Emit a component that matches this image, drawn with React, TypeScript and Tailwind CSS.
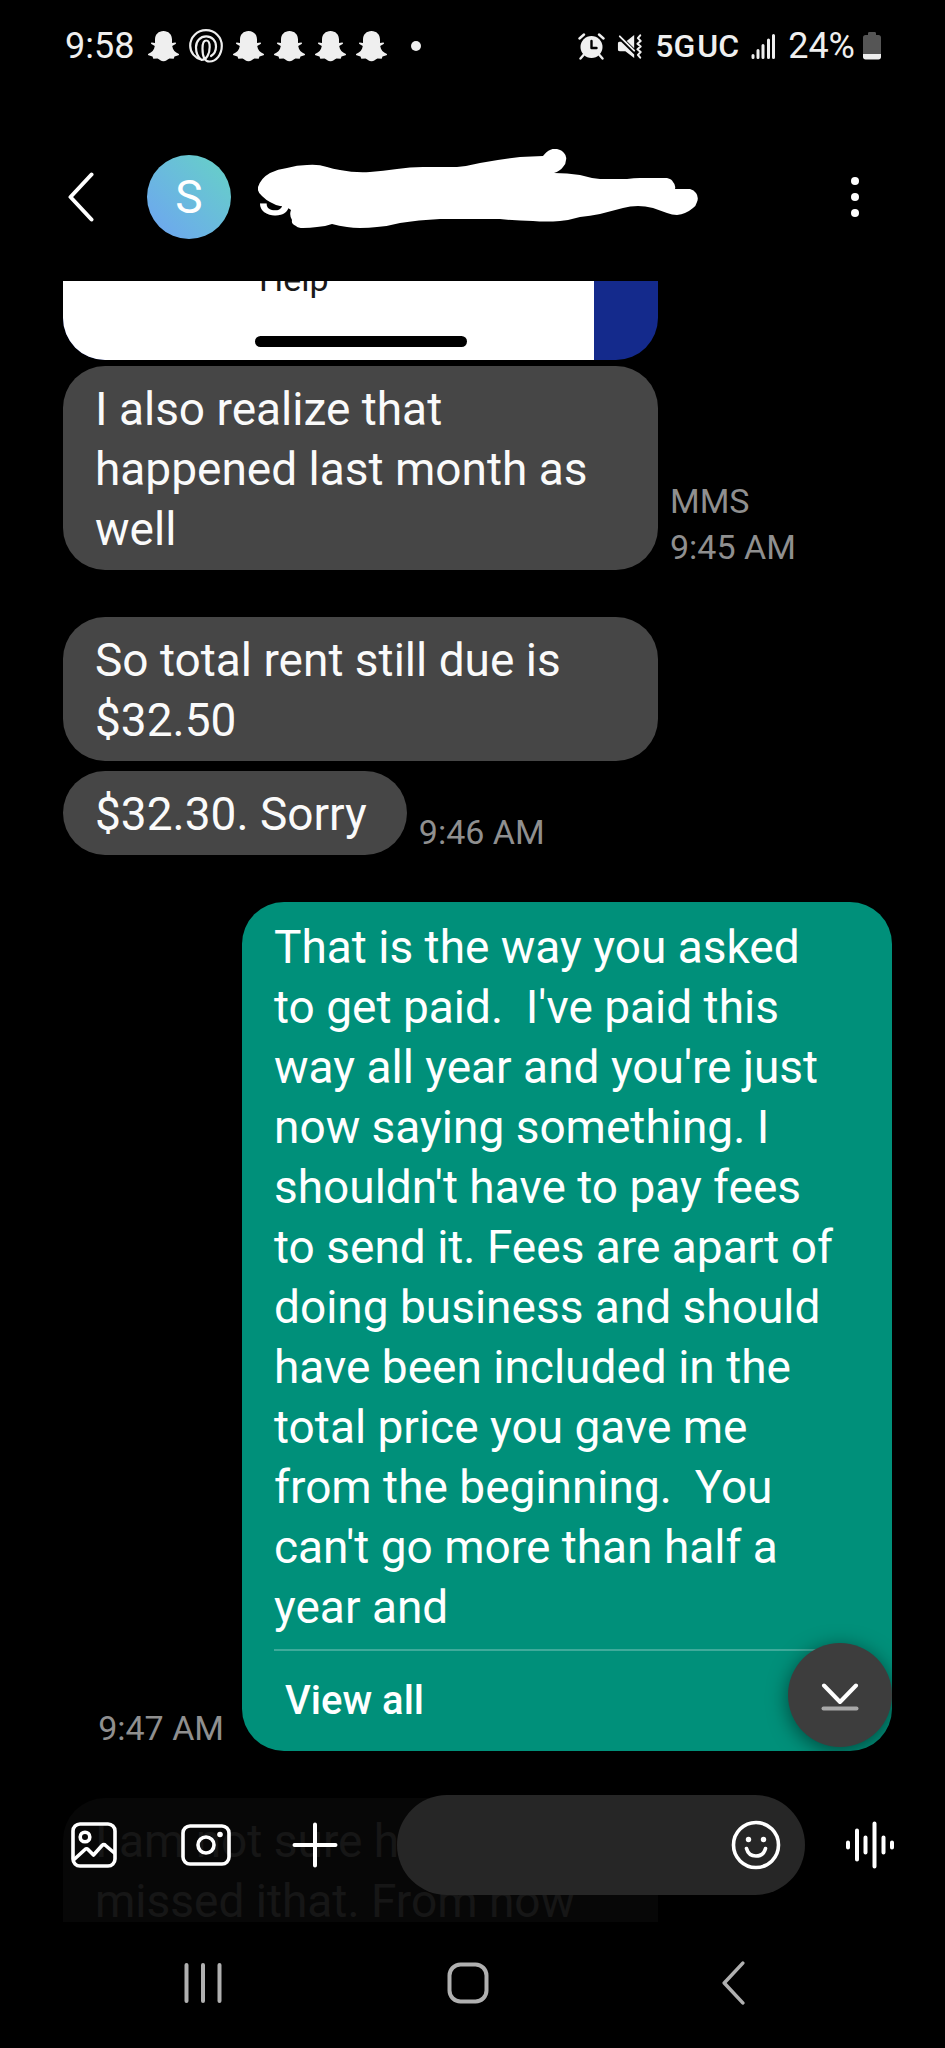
// App.tsx
import { useState } from "react";
import type { ReactNode } from "react";

const LONG_REPLY =
  "That is the way you asked to get paid.  I've paid this way all year and you're just now saying something. I shouldn't have to pay fees to send it. Fees are apart of doing business and should have been included in the total price you gave me from the beginning.  You can't go more than half a year and";

/* ---------- icons ---------- */

function Ghost() {
  return (
    <svg width="31" height="31" viewBox="0 0 31 31" fill="currentColor">
      <path d="M15.5 0c5 0 8.5 3.5 8.5 8.5V12l3.2-.6c1 0 1.2 1 .4 1.5L24.2 15c.6 4 3 6.5 6.3 7.8.7.4.7 1 0 1.4l-4 1.4-.8 2.2-4.2-.3c-2 .8-3.5 2.8-6 2.8s-4-2-6-2.8l-4.2.3-.8-2.2-4-1.4c-.7-.4-.7-1 0-1.4C3.8 21.5 6.2 19 6.8 15l-3.4-2.1c-.8-.5-.6-1.5.4-1.5L7 12V8.5C7 3.5 10.5 0 15.5 0z" />
    </svg>
  );
}

function Spiral() {
  return (
    <svg
      width="34"
      height="34"
      viewBox="0 0 34 34"
      fill="none"
      stroke="currentColor"
      strokeWidth="2.2"
      strokeLinecap="round"
      strokeLinejoin="round"
    >
      <path d="M12.5 30.8C5.800 29 1.200 23.500 1.200 16.800 1.200 8 8.200 1.200 17 1.200S32.800 8 32.800 16.800c0 8.500-5.300 15.700-12.300 15.700-4.500 0-7-4.500-7-13 0-5 1.300-8 3.700-8 2.500 0 3.500 3 3.500 6.500 0 6.500-3 12.800-8.200 12.800M12.500 30.800C9 28.500 7 23.500 7 18.300 7 12 11.300 7.400 17.200 7.400c5.800 0 9.800 4.300 9.800 10 0 4-1.800 7.600-5 9.600" />
    </svg>
  );
}

function Alarm() {
  return (
    <svg width="27" height="27" viewBox="0 0 27 27" fill="none">
      <circle cx="13.5" cy="14" r="11" fill="currentColor" />
      <path
        d="M1.5 5.5 6 1.500M25.500 5.500 21 1.500M5.500 22 2.500 25.500M21.500 22l3 3.500"
        stroke="currentColor"
        strokeWidth="2.4"
        strokeLinecap="round"
      />
      <path
        d="M13.500 8v7h5"
        stroke="#000"
        strokeWidth="2.4"
        strokeLinecap="round"
        strokeLinejoin="round"
      />
    </svg>
  );
}

function MutedVibrate() {
  return (
    <svg width="26" height="27" viewBox="0 0 28 27" fill="none">
      <path
        d="M2.500 8.500h2L18.500 22v4L9 18.500H3c-1.500 0-2-.5-2-2v-6c0-1 .5-2 1.500-2zM18.500 1v14.500L10.500 7.500z"
        fill="currentColor"
      />
      <path
        d="M3 2.500 18.500 18"
        stroke="currentColor"
        strokeWidth="2"
        strokeLinecap="round"
      />
      <path
        d="M25 1.500l-2.500 3 3 3-3.500 3 3.500 3-3.500 3 3.500 3-3 3 2.500 3"
        stroke="currentColor"
        strokeWidth="2.2"
        strokeLinecap="round"
        strokeLinejoin="round"
      />
    </svg>
  );
}

function Signal() {
  return (
    <svg
      width="25"
      height="27"
      viewBox="0 0 25 27"
      stroke="currentColor"
      strokeWidth="3"
      strokeLinecap="round"
    >
      <path d="M2 22.500V24.500M7 17.500v7M12 12.500v12M17.500 7v17.500M22.500 2.500v22" />
    </svg>
  );
}

function Battery() {
  return (
    <svg width="18" height="28" viewBox="0 0 18 28">
      <path
        d="M5 1.500C5 .5 5.500 0 6.500 0h5c1 0 1.500.5 1.500 1.500V3h2.500C17 3 18 4 18 5.500V22H0V5.500C0 4 1 3 2.500 3H5z"
        fill="#555"
      />
      <path d="M0 22h18v3c0 1.500-1 2.500-2.500 2.500h-13C1 27.500 0 26.500 0 25z" fill="#efefef" />
    </svg>
  );
}

// marker stroke drawn over the contact name
function Scribble() {
  return (
    <svg width="440" height="80" viewBox="0 0 440 80" fill="#fff">
      <path d="M0 38Q3 29 12 24Q20 20 29 19Q39 16 49 16Q60 15 69 18Q75 20 82 21Q97 24 112 23Q125 22 139 20Q152 18 165 18H199Q210 17 222 14Q242 10 262 8L285 7Q289 2 292 1Q296 -1 299 0Q304 1 306 4Q309 7 308 11Q308 15 305 18Q302 22 296 24Q309 24 322 26Q332 29 342 30H369Q376 29 382 29H409Q414 30 415 33Q418 36 417 40H432Q436 41 438 44Q441 48 439 53Q438 57 435 59Q428 65 419 66Q414 66 409 64L395 59Q387 57 380 57Q372 57 365 59L342 65Q332 67 322 68Q312 71 302 72Q288 73 275 72Q258 72 242 70H182Q160 71 142 74Q131 77 119 78Q111 79 102 79Q95 79 89 78Q81 77 74 75Q66 78 59 78Q52 79 45 79Q40 79 38 77Q33 75 34 71Q31 66 33 61Q28 57 22 57Q17 56 12 53Q8 51 4 47Q-1 43 0 38Z" />
    </svg>
  );
}

function ChevronLeft({ size }: { size: number }) {
  return (
    <svg
      width={size / 2}
      height={size}
      viewBox="0 0 26 52"
      fill="none"
      stroke="currentColor"
      strokeWidth="4"
      strokeLinecap="round"
      strokeLinejoin="round"
    >
      <path d="M23.500 3.500 2.500 26l21 22.500" />
    </svg>
  );
}

function GalleryIcon() {
  return (
    <svg
      width="46"
      height="46"
      viewBox="0 0 46 46"
      fill="none"
      stroke="currentColor"
      strokeWidth="3.6"
      strokeLinejoin="round"
    >
      <rect x="2" y="2" width="42" height="42" rx="7" />
      <circle cx="14" cy="15" r="4.800" />
      <path d="M2.500 38 14 27.500c1-1 2.200-1 3 0l5.500 5.500 8.500-9.500c1.200-1.200 2.500-1.200 3.600 0L44 31.500" />
    </svg>
  );
}

function CameraIcon() {
  return (
    <svg width="50" height="42" viewBox="0 0 50 42" fill="none">
      <rect
        x="2"
        y="2"
        width="46"
        height="38"
        rx="7"
        stroke="currentColor"
        strokeWidth="3.600"
      />
      <circle cx="25" cy="21" r="8" stroke="currentColor" strokeWidth="3.600" />
      <circle cx="39" cy="10.500" r="2.800" fill="currentColor" />
    </svg>
  );
}

function PlusIcon() {
  return (
    <svg
      width="46"
      height="46"
      viewBox="0 0 46 46"
      stroke="currentColor"
      strokeWidth="4"
      strokeLinecap="round"
    >
      <path d="M23 2.500v41M2.500 23h41" />
    </svg>
  );
}

function SmileyIcon() {
  return (
    <svg width="50" height="50" viewBox="0 0 50 50" fill="none">
      <circle cx="25" cy="25" r="22.500" stroke="currentColor" strokeWidth="3.600" />
      <circle cx="17.500" cy="19.500" r="2.700" fill="currentColor" />
      <circle cx="32.500" cy="19.500" r="2.700" fill="currentColor" />
      <path
        d="M15.500 28.500c1.500 5.500 5.500 7.500 9.500 7.500s8-2 9.500-7.500"
        stroke="currentColor"
        strokeWidth="3.600"
        strokeLinecap="round"
      />
    </svg>
  );
}

function VoiceIcon() {
  return (
    <svg
      width="50"
      height="48"
      viewBox="0 0 50 48"
      stroke="currentColor"
      strokeWidth="4"
      strokeLinecap="round"
    >
      <path d="M3 21.500v5M12 9.500v29M20.500 16.500v15M29.500 2.500v43M38.500 16.500v15M47 21.500v5" />
    </svg>
  );
}

/* ---------- messages ---------- */

function Received({
  children,
  stamp,
}: {
  children: ReactNode;
  stamp?: string[];
}) {
  return (
    <div className="flex items-end gap-3">
      <p className="max-w-[595px] rounded-[42px] bg-[#464646] pt-[13px] pr-10 pb-[11px] pl-8 text-[#fafafa]">
        {children}
      </p>
      {stamp && (
        <div className="shrink-0 text-[34px] leading-[46px] text-[#8f8f8f]">
          {stamp.map((s) => (
            <div key={s}>{s}</div>
          ))}
        </div>
      )}
    </div>
  );
}

export default function App() {
  const [draft, setDraft] = useState("");

  return (
    <div className="flex h-screen flex-col overflow-hidden bg-black font-[Roboto,sans-serif] text-[46px] leading-[60px] text-white">
      {/* Status bar */}
      <div className="flex h-[92px] shrink-0 items-center justify-between pr-16 pl-[65px] text-[36px] leading-10 text-[#efefef]">
        <div className="flex items-center">
          <span className="mr-3.5">9:58</span>
          <div className="flex items-center gap-2.5">
            <Ghost />
            <Spiral />
            <Ghost />
            <Ghost />
            <Ghost />
            <Ghost />
          </div>
          <span className="ml-6 h-2.5 w-2.5 rounded-full bg-[#efefef]" />
        </div>
        <div className="flex items-center gap-3">
          <Alarm />
          <MutedVibrate />
          <span className="flex gap-0.5 text-[32px] font-medium">
            <span>5G</span>
            <span>UC</span>
          </span>
          <Signal />
          <span className="flex items-center gap-2">
            24%
            <Battery />
          </span>
        </div>
      </div>

      {/* Conversation header */}
      <header className="flex h-[189px] shrink-0 items-center pt-[21px] pr-[72px] pl-[68px]">
        <button type="button" aria-label="Back" className="mr-[53px]">
          <ChevronLeft size={52} />
        </button>
        <div className="flex h-[84px] w-[84px] items-center justify-center rounded-full bg-linear-to-tr from-[#6ea2f2] to-[#66d2c4]">
          S
        </div>
        <div className="relative ml-[27px] flex-1">
          <h1 className="text-[54px] font-medium">S</h1>
          <div className="absolute -top-[18px] left-0">
            <Scribble />
          </div>
        </div>
        <button
          type="button"
          aria-label="More options"
          className="flex w-9 flex-col items-center gap-2"
        >
          <span className="h-2 w-2 rounded-full bg-white" />
          <span className="h-2 w-2 rounded-full bg-white" />
          <span className="h-2 w-2 rounded-full bg-white" />
        </button>
      </header>

      {/* Messages */}
      <main className="relative min-h-0 flex-1 overflow-hidden">
        <div className="flex flex-col pr-[53px] pl-[63px]">
          {/* Picture attachment, scrolled most of the way out */}
          <div className="mb-1.5 flex h-[79px] w-[595px] overflow-hidden rounded-b-[42px] bg-[#142a8c]">
            <div className="flex w-[531px] flex-col items-start justify-end bg-white pb-[13px] pl-48 text-[34px] leading-[46px] text-[#1a1a1a]">
              <span className="mb-[34px] shrink-0 px-1">Help</span>
              <span className="h-[11px] w-[212px] shrink-0 rounded-full bg-black" />
            </div>
          </div>

          <Received stamp={["MMS", "9:45 AM"]}>
            I also realize that happened last month as well
          </Received>

          <div className="mt-[47px] flex flex-col gap-2.5">
            <Received>So total rent still due is $32.50</Received>
            <Received stamp={["9:46 AM"]}>$32.30. Sorry</Received>
          </div>

          <div className="mt-[47px] flex items-end justify-end gap-[18px]">
            <span className="text-[34px] leading-[46px] text-[#8f8f8f]">
              9:47 AM
            </span>
            <div className="relative w-[650px] rounded-[42px] bg-[#00907a] px-8 pt-[15px]">
              <p className="pr-3 whitespace-pre-wrap">{LONG_REPLY}</p>
              <button
                type="button"
                className="mt-3 block h-[102px] w-full border-t-2 border-[#3fab9b] px-[11px] text-left text-[40px] font-medium"
              >
                View all
              </button>
              <button
                type="button"
                aria-label="Jump to latest"
                className="absolute right-0 bottom-1 flex h-[104px] w-[104px] items-center justify-center rounded-full bg-[#3d3d3d] pt-1 shadow-[0_4px_20px_rgba(0,0,0,0.5)]"
              >
                <svg
                  width="38"
                  height="28"
                  viewBox="0 0 38 28"
                  fill="none"
                  strokeWidth="4"
                  strokeLinecap="round"
                  strokeLinejoin="round"
                >
                  <path d="M3 2.500 19 19 35 2.500" stroke="#fff" />
                  <path d="M2.500 25.500h33" stroke="#a8a8a8" />
                </svg>
              </button>
            </div>
          </div>

          {/* Next message runs on below the compose bar */}
          <p className="mt-[47px] h-[204px] w-[595px] rounded-[42px] bg-[#464646] pt-[13px] pr-10 pl-8 text-[#dcdcdc]">
            I am not sure how I missed ithat. From now
          </p>
        </div>

        {/* Compose bar floats over the list */}
        <div className="absolute inset-x-0 bottom-0 flex items-center bg-black/90 pt-5 pr-[50px] pb-[27px] pl-[71px]">
          <button type="button" aria-label="Gallery">
            <GalleryIcon />
          </button>
          <button type="button" aria-label="Camera" className="ml-16">
            <CameraIcon />
          </button>
          <button type="button" aria-label="Add" className="ml-[61px]">
            <PlusIcon />
          </button>
          <div className="ml-[59px] flex h-[100px] min-w-0 flex-1 items-center rounded-full bg-[#262626] pr-6 pl-8">
            <input
              type="text"
              aria-label="Message"
              value={draft}
              onChange={(e) => setDraft(e.target.value)}
              className="min-w-0 flex-1 bg-transparent outline-none"
            />
            <button type="button" aria-label="Emoji">
              <SmileyIcon />
            </button>
          </div>
          <button type="button" aria-label="Voice message" className="ml-10">
            <VoiceIcon />
          </button>
        </div>
      </main>

      {/* System navigation */}
      <nav className="flex h-[126px] shrink-0 items-center justify-between pr-[200px] pb-1 pl-[183px] text-[#b0b0b0]">
        <button type="button" aria-label="Recent apps">
          <svg
            width="40"
            height="42"
            viewBox="0 0 40 42"
            stroke="currentColor"
            strokeWidth="4"
            strokeLinecap="round"
          >
            <path d="M3.500 3v36M20 3v36M36.500 3v36" />
          </svg>
        </button>
        <button type="button" aria-label="Home" className="mr-2.5">
          <svg
            width="42"
            height="42"
            viewBox="0 0 42 42"
            fill="none"
            stroke="currentColor"
            strokeWidth="4"
          >
            <rect x="2.500" y="2.500" width="37" height="37" rx="11" />
          </svg>
        </button>
        <button type="button" aria-label="Back">
          <ChevronLeft size={46} />
        </button>
      </nav>
    </div>
  );
}
